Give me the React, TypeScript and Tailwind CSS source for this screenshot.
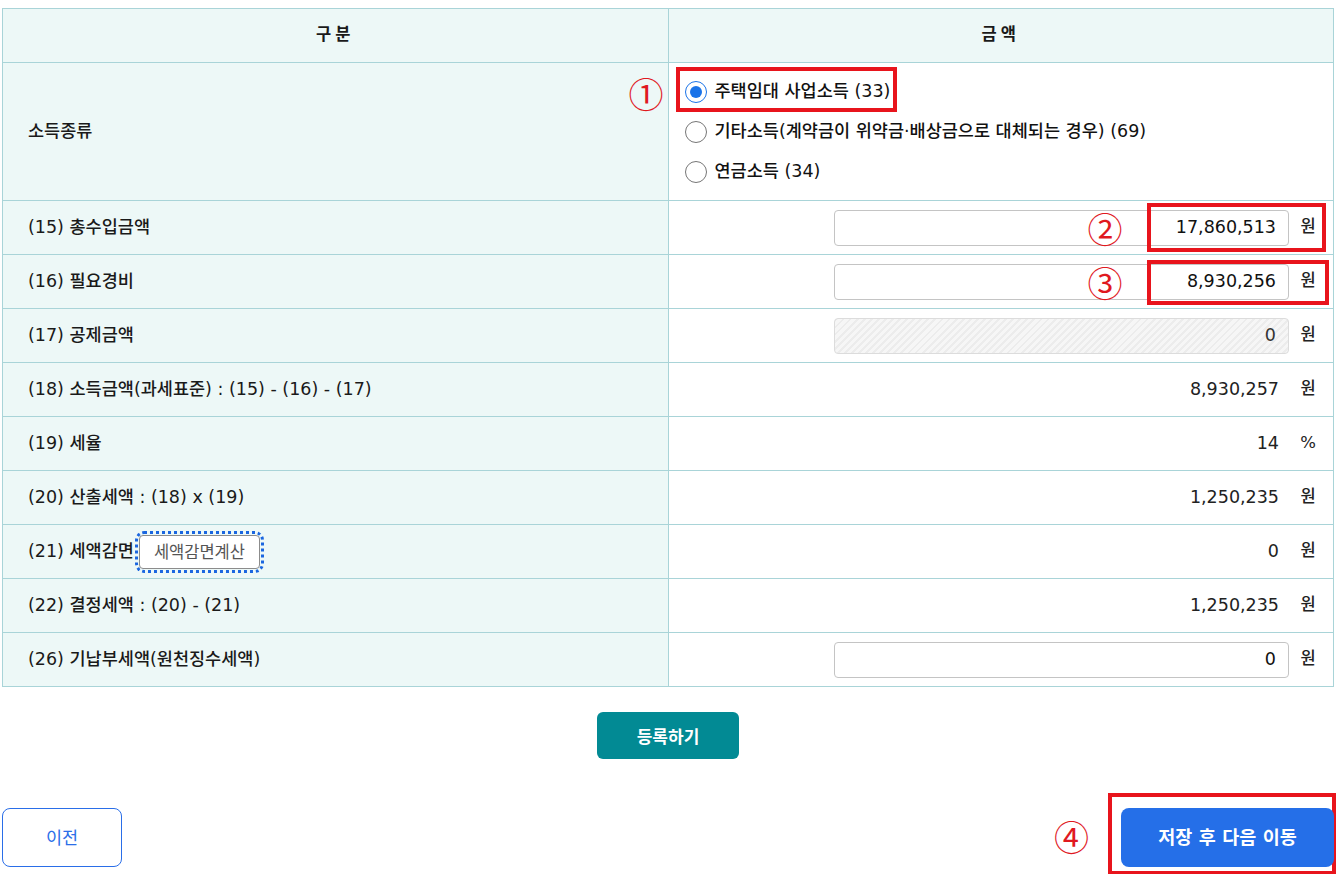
import React from 'react';

const font = { fontFamily: '"DejaVu Sans", "Noto Sans CJK KR", sans-serif' };

function Mark({ n, className }: { n: string; className: string }) {
    return (
        <span
            className={`absolute text-[35px] leading-none text-[#e0191f] font-normal ${className}`}
            style={{ fontFamily: '"Noto Sans CJK KR", serif' }}
        >
            {n}
        </span>
    );
}

function Radio({ checked, label }: { checked?: boolean; label: string }) {
    return (
        <label className="flex items-center gap-[8px] h-[40px]">
            <span
                className={`w-[22px] h-[22px] rounded-full border flex items-center justify-center bg-white ${
                    checked ? 'border-[#1a73e8]' : 'border-[#767676]'
                }`}
            >
                {checked && <span className="w-[12px] h-[12px] rounded-full bg-[#1a73e8]" />}
            </span>
            <span className="text-[17.5px] text-[#111]">{label}</span>
        </label>
    );
}

function Amount({ value, unit = '원', input, disabled }: { value: string; unit?: string; input?: boolean; disabled?: boolean }) {
    return (
        <div className="flex items-center justify-end gap-[10px] pr-[16px]">
            {input ? (
                <div
                    className={`w-[455px] h-[36px] rounded-[4px] border flex items-center justify-end pr-[12px] text-[17.5px] ${
                        disabled
                            ? 'border-[#dcdcdc] bg-[repeating-linear-gradient(135deg,#ececec_0px,#ececec_2px,#f6f6f6_2px,#f6f6f6_5px)] text-[#333]'
                            : 'border-[#c4c4c4] bg-white text-[#111]'
                    }`}
                >
                    {value}
                </div>
            ) : (
                <span className="text-[17.5px] text-[#222] pr-[10px]">{value}</span>
            )}
            <span className="w-[18px] text-[16.5px] text-[#222] text-center">{unit}</span>
        </div>
    );
}

const rows: { label: React.ReactNode; value: string; unit?: string; input?: boolean; disabled?: boolean }[] = [
    { label: '(15) 총수입금액', value: '17,860,513', input: true },
    { label: '(16) 필요경비', value: '8,930,256', input: true },
    { label: '(17) 공제금액', value: '0', input: true, disabled: true },
    { label: '(18) 소득금액(과세표준) : (15) - (16) - (17)', value: '8,930,257' },
    { label: '(19) 세율', value: '14', unit: '%' },
    { label: '(20) 산출세액 : (18) x (19)', value: '1,250,235' },
    {
        label: (
            <span className="flex items-center gap-[5px]">
                (21) 세액감면
                <span className="rounded-[5px] outline-[3px] outline-dotted outline-[#1a66e0] outline-offset-[1px]">
                    <button
                        className="h-[34px] px-[14px] bg-white border border-[#8c8c8c] rounded-[4px] text-[16.5px] text-[#555] font-normal"
                        style={{ fontFamily: '"Noto Sans CJK KR", sans-serif' }}
                    >
                        세액감면계산
                    </button>
                </span>
            </span>
        ),
        value: '0',
    },
    { label: '(22) 결정세액 : (20) - (21)', value: '1,250,235' },
    { label: '(26) 기납부세액(원천징수세액)', value: '0', input: true },
];

export default function App() {
    return (
        <div className="min-h-screen bg-white px-[2px] pt-[8px]" style={font}>
            <table className="w-full border-collapse text-[17.5px] text-[#1a1a1a] font-medium">
                <thead>
                    <tr className="h-[54px] bg-[#edf8f7]">
                        <th className="w-1/2 border border-[#a9d4d8] font-bold text-[16.5px] tracking-[4px]">구분</th>
                        <th className="w-1/2 border border-[#a9d4d8] font-bold text-[16.5px] tracking-[4px]">금액</th>
                    </tr>
                </thead>
                <tbody>
                    <tr className="h-[138px]">
                        <td className="border border-[#a9d4d8] bg-[#edf8f7] pl-[25px] relative">
                            소득종류
                            <Mark n="①" className="right-[4px] top-[12px]" />
                        </td>
                        <td className="border border-[#a9d4d8] pl-[16px] relative">
                            <div className="flex flex-col">
                                <Radio checked label="주택임대 사업소득 (33)" />
                                <Radio label="기타소득(계약금이 위약금·배상금으로 대체되는 경우) (69)" />
                                <Radio label="연금소득 (34)" />
                            </div>
                            <div className="absolute left-[7px] top-[4px] w-[221px] h-[45px] border-4 border-[#e8141c]" />
                        </td>
                    </tr>
                    {rows.map((r, i) => (
                        <tr key={i} className="h-[54px]">
                            <td className="border border-[#a9d4d8] bg-[#edf8f7] pl-[25px]">{r.label}</td>
                            <td className="border border-[#a9d4d8] relative">
                                <Amount value={r.value} unit={r.unit} input={r.input} disabled={r.disabled} />
                                {i === 0 && (
                                    <>
                                        <Mark n="②" className="left-[419px] top-[9px]" />
                                        <div className="absolute left-[478px] top-[2px] w-[179px] h-[49px] border-4 border-[#e8141c]" />
                                    </>
                                )}
                                {i === 1 && (
                                    <>
                                        <Mark n="③" className="left-[419px] top-[9px]" />
                                        <div className="absolute left-[478px] top-[5px] w-[182px] h-[45px] border-4 border-[#e8141c]" />
                                    </>
                                )}
                            </td>
                        </tr>
                    ))}
                </tbody>
            </table>

            <div className="flex justify-center mt-[25px]">
                <button
                    className="w-[142px] h-[47px] rounded-[6px] bg-[#028a94] text-white text-[17px] font-bold"
                    style={{ fontFamily: '"Noto Sans CJK KR", sans-serif' }}
                >
                    등록하기
                </button>
            </div>

            <div className="flex justify-between items-center mt-[49px]">
                <button
                    className="w-[120px] h-[59px] rounded-[8px] border border-[#2a6ee8] bg-white text-[#2a6ee8] text-[17.5px] font-normal"
                    style={{ fontFamily: '"Noto Sans CJK KR", sans-serif' }}
                >
                    이전
                </button>
                <div className="relative">
                    <Mark n="④" className="-left-[67px] top-[10px]" />
                    <div className="absolute -left-[13px] -top-[15px] w-[228px] h-[82px] border-4 border-[#e8141c]" />
                    <button className="relative w-[213px] h-[59px] rounded-[8px] bg-[#256fe8] text-white text-[18.5px] font-bold">
                        저장 후 다음 이동
                    </button>
                </div>
            </div>
        </div>
    );
}
